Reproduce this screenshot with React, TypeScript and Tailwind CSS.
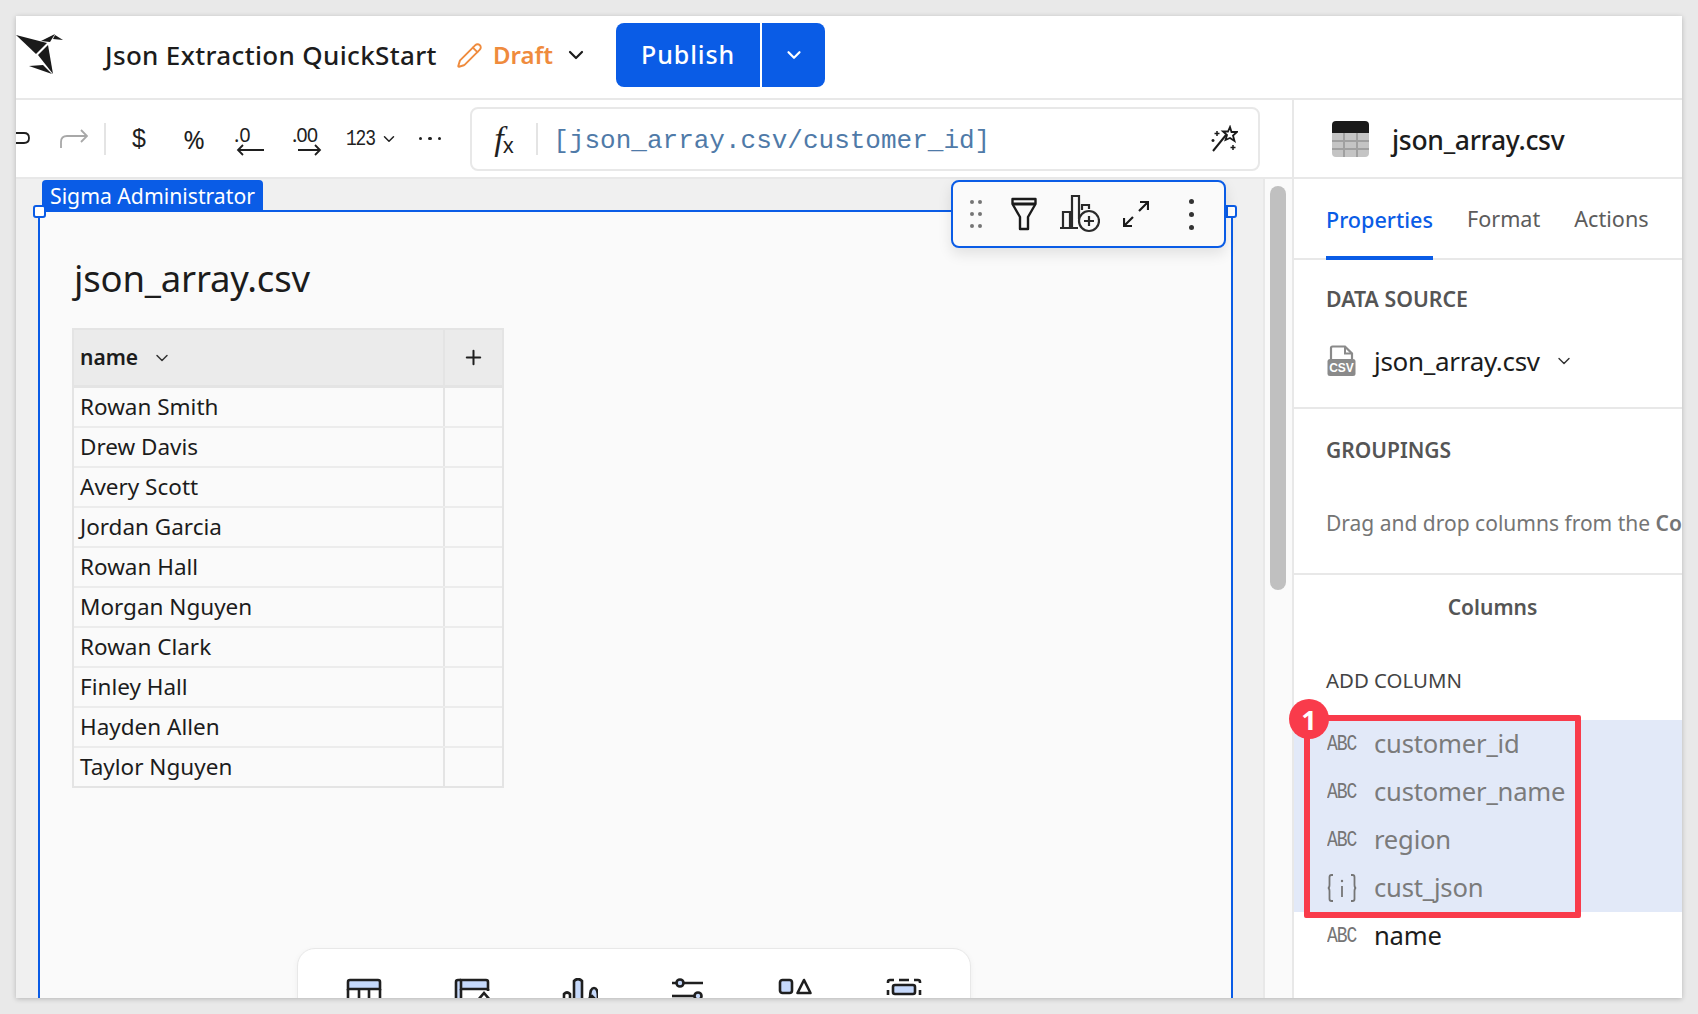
import { ChevronDown, Plus, Pencil } from "lucide-react";

const PEOPLE = [
  "Rowan Smith", "Drew Davis", "Avery Scott", "Jordan Garcia", "Rowan Hall",
  "Morgan Nguyen", "Rowan Clark", "Finley Hall", "Hayden Allen", "Taylor Nguyen",
];

function Logo() {
  return (
    <svg width="50" height="50" viewBox="16 32 50 50" className="shrink-0 mt-1" fill="#1a1a1a">
      <polygon points="16,35 47,43 36,54" />
      <polygon points="38,55 48,45 53,74" />
      <polygon points="29,66 43,65 52,74" />
      <polygon points="41,41 55,34 50,42" />
      <polygon points="55,35 63,40 53,39" />
    </svg>
  );
}

function Abc() {
  return <span className="w-[29px] shrink-0 font-['Liberation_Mono'] text-[18px] leading-none tracking-[-1px] text-[#757575] scale-y-[1.25]">ABC</span>;
}

function JsonIcon() {
  return (
    <svg width="30" height="30" viewBox="0 0 30 30" fill="none" stroke="#757575" strokeWidth="1.8" className="shrink-0">
      <path d="M6 2 H4.5 Q2.5 2 2.5 4 V12 Q2.5 15 0.8 15 Q2.5 15 2.5 18 V26 Q2.5 28 4.5 28 H6" />
      <path d="M24 2 H25.5 Q27.5 2 27.5 4 V12 Q27.5 15 29.2 15 Q27.5 15 27.5 18 V26 Q27.5 28 25.5 28 H24" />
      <path d="M15 13 V24" />
      <circle cx="15" cy="8" r="1.2" fill="#757575" stroke="none" />
    </svg>
  );
}

function BottomIcon({ kind }: { kind: number }) {
  const s = { stroke: "#1f1f1f", strokeWidth: 2.6, fill: "none" };
  return (
    <svg width="36" height="36" viewBox="0 0 36 36" className="shrink-0">
      {kind === 0 && (
        <g {...s}>
          <path d="M2 11 V4 Q2 2 4 2 H32 Q34 2 34 4 V11 Z" fill="#c6d9fb" />
          <path d="M2 11 V34 H34 V11 M13 11 V34 M23 11 V34" />
        </g>
      )}
      {kind === 1 && (
        <g {...s}>
          <rect x="2" y="2" width="5" height="32" fill="#c6d9fb" stroke="none" />
          <path d="M7 11 V2 H32 Q34 2 34 4 V11 Z" fill="#c6d9fb" />
          <path d="M2 34 V4 Q2 2 4 2 H7 M7 11 V34 M34 11 V13" />
          <path d="M24 22 L30 15 L36 22" />
        </g>
      )}
      {kind === 2 && (
        <g {...s}>
          <path d="M12 34 V3 Q16 -1 20 3 V34" fill="#c6d9fb" />
          <path d="M2 34 V16 Q5 13 8 16 V34" />
          <path d="M28 20 Q28 10 32 10 Q36 10 36 20" fill="#c6d9fb" />
          <path d="M22 26 L30 18 L36 24" />
        </g>
      )}
      {kind === 3 && (
        <g {...s}>
          <path d="M2 5 H6 M14 5 H33" />
          <circle cx="10" cy="5" r="3.5" fill="#c6d9fb" />
          <path d="M2 18 H24" />
          <circle cx="28" cy="18" r="3.5" fill="#c6d9fb" />
        </g>
      )}
      {kind === 4 && (
        <g {...s}>
          <rect x="2" y="2" width="12" height="13" rx="2.5" fill="#c6d9fb" />
          <path d="M26 2 L32.5 15 H19.5 Z" strokeLinejoin="round" />
        </g>
      )}
      {kind === 5 && (
        <g {...s}>
          <path d="M2 5 V4 Q2 2 4 2 H8 M13 2 H23 M28 2 H32 Q34 2 34 4 V5 M2 12 V17 M34 12 V17" />
          <rect x="7" y="7" width="22" height="9" rx="2" fill="#c6d9fb" />
        </g>
      )}
    </svg>
  );
}

export default function App() {
  return (
    <div className="h-screen bg-[#e9e9e9] p-4 font-['Noto_Sans',sans-serif] overflow-hidden">
      <div className="relative h-full flex flex-col bg-white overflow-hidden shadow-[0_1px_5px_rgba(0,0,0,0.22)]">
        {/* Top bar */}
        <header className="h-[84px] shrink-0 border-b-2 border-[#e8e8e8] flex items-center pb-1">
          <Logo />
          <div className="ml-[39px] text-[26px] font-medium tracking-[0.35px] text-[#1c1c1c] whitespace-nowrap">Json Extraction QuickStart</div>
          <Pencil size={27} strokeWidth={1.7} className="ml-[19px] text-[#ef8b3d]" />
          <div className="ml-[10px] text-[24px] font-semibold text-[#ef8b3d] leading-none">Draft</div>
          <ChevronDown size={24} strokeWidth={2.2} className="ml-[11px] text-[#1c1c1c]" />
          <div className="ml-[28px] h-[64px] w-[209px] rounded-lg bg-[#0a5ce6] flex text-white">
            <div className="w-[144px] flex items-center justify-center text-[25px] font-medium tracking-[0.9px]">Publish</div>
            <div className="flex-1 border-l-2 border-white flex items-center justify-center">
              <ChevronDown size={22} strokeWidth={2.4} />
            </div>
          </div>
        </header>

        <div className="flex-1 flex min-h-0">
          {/* Left column */}
          <div className="w-[1278px] shrink-0 flex flex-col border-r-2 border-[#e8e8e8] min-h-0">
            <div className="h-[79px] shrink-0 border-b-2 border-[#e8e8e8] flex items-center relative">
              <svg width="14" height="20" viewBox="0 0 14 20" fill="none" stroke="#1f1f1f" strokeWidth="1.8" className="shrink-0">
                <path d="M0 4 H8 Q13 4 13 9 Q13 14 8 14 H0" />
              </svg>
              <svg width="28" height="22" viewBox="0 0 28 22" fill="none" stroke="#a8a8a8" strokeWidth="1.8" className="ml-[30px] shrink-0">
                <path d="M27 8 H7 Q1 8 1 14 V20 M21 2 L27 8 L21 14" />
              </svg>
              <div className="ml-[16px] w-[2px] h-[32px] bg-[#e4e4e4]" />
              <span className="ml-[24px] w-[18px] text-[25px] leading-none font-['Liberation_Sans'] text-[#1f1f1f] text-center">$</span>
              <span className="ml-[33px] w-[26px] text-[26px] leading-none text-[#1f1f1f] text-center">%</span>
              <svg width="32" height="34" viewBox="0 0 32 34" className="ml-[26px] shrink-0" fill="#1f1f1f">
                <text x="1" y="20" fontSize="20" fontFamily="Noto Sans">.0</text>
                <path d="M31 28 H5 M10 23 L5 28 L10 33" fill="none" stroke="#1f1f1f" strokeWidth="1.8" />
              </svg>
              <svg width="32" height="34" viewBox="0 0 32 34" className="ml-[27px] shrink-0" fill="#1f1f1f">
                <text x="0" y="20" fontSize="20" fontFamily="Noto Sans" letterSpacing="-1">.00</text>
                <path d="M6 28 H28 M23 23 L28 28 L23 33" fill="none" stroke="#1f1f1f" strokeWidth="1.8" />
              </svg>
              <span className="ml-[22px] font-['Liberation_Mono'] text-[18px] tracking-[-1.2px] text-[#1f1f1f] leading-none scale-y-[1.2]">123</span>
              <ChevronDown size={18} strokeWidth={2} className="ml-[5px] text-[#1f1f1f]" />
              <div className="ml-[21px] flex gap-[6px]">
                <span className="w-[3.5px] h-[3.5px] rounded-full bg-[#1f1f1f]" />
                <span className="w-[3.5px] h-[3.5px] rounded-full bg-[#1f1f1f]" />
                <span className="w-[3.5px] h-[3.5px] rounded-full bg-[#1f1f1f]" />
              </div>
              {/* Formula bar */}
              <div className="ml-[29px] w-[790px] h-[64px] rounded-lg border-2 border-[#e8e8e8] flex items-center">
                <span className="ml-[22px] w-[26px] flex items-end text-[#1f1f1f] leading-none">
                  <span className="font-['Liberation_Serif'] italic text-[34px]">f</span>
                  <span className="text-[21px] -ml-[1px]">x</span>
                </span>
                <div className="ml-[16px] w-[2px] h-[32px] bg-[#e4e4e4]" />
                <span className="ml-[15px] pt-[5px] font-['Liberation_Mono'] text-[26px] text-[#4f7aa8] whitespace-nowrap">[json_array.csv/customer_id]</span>
                <svg width="28" height="28" viewBox="0 0 28 28" className="ml-auto mr-[20px]" fill="none" stroke="#1a1a1a" strokeWidth="2">
                  <path d="M3 26 L16 10" />
                  <path d="M20 2 L21.5 7 L27 7 L23 10.5 L24.5 16 L20 13 L15.5 15 L17 10 L13 6.5 L18 6.5 Z" strokeWidth="1.8" />
                  <path d="M7 6 V11 M4.5 8.5 H9.5 M23 20 V25 M20.5 22.5 H25.5 M3 14 V17 M1.5 15.5 H4.5" strokeWidth="1.5" />
                </svg>
              </div>
            </div>

            {/* Canvas */}
            <div className="flex-1 flex min-h-0 overflow-hidden">
              <div className="relative flex-1 bg-[#f0f0f0] pt-[31px] pl-[22px] flex min-h-0">
                <div className="w-[1195px] h-[900px] shrink-0 border-2 border-[#0a5ce6] bg-[#fafafa] pl-[32px] pt-[41px]">
                  <div className="pl-[2px] text-[36.5px] leading-[50px] text-[#1c1c1c] tracking-[-0.2px]">json_array.csv</div>
                  <div className="mt-[25px] w-[432px] border-2 border-[#e4e4e4]">
                    <div className="h-[58px] bg-[#ebebeb] border-b-[3px] border-[#e4e4e4] flex">
                      <div className="w-[371px] border-r-2 border-[#e4e4e4] flex items-center pl-[6px]">
                        <span className="text-[21px] font-semibold text-[#1c1c1c]">name</span>
                        <ChevronDown size={20} strokeWidth={1.8} className="ml-[14px] text-[#333]" />
                      </div>
                      <div className="flex-1 flex items-center justify-center">
                        <Plus size={23} strokeWidth={2.1} className="text-[#1f1f1f]" />
                      </div>
                    </div>
                    {PEOPLE.map((p, i) => (
                      <div key={p} className={`flex ${i < PEOPLE.length - 1 ? "h-[40px] border-b-2 border-[#ececec]" : "h-[38px]"}`}>
                        <div className="w-[371px] border-r-2 border-[#e4e4e4] pl-[6px] text-[22.5px] leading-[38px] text-[#1c1c1c] whitespace-nowrap">{p}</div>
                      </div>
                    ))}
                  </div>
                </div>

                {/* Selection decorations */}
                <div className="absolute left-[26px] top-[1px] h-[31px] w-[221px] rounded-t bg-[#0a5ce6] pl-[8px] text-[21.2px] leading-[32px] text-white whitespace-nowrap">Sigma Administrator</div>
                <div className="absolute left-[17px] top-[26px] w-[13px] h-[13px] rounded-[3px] border-2 border-[#0a5ce6] bg-white" />
                <div className="absolute left-[1210px] top-[26px] w-[11px] h-[13px] rounded-r-[3px] border-2 border-[#0a5ce6] bg-white" />

                {/* Floating element toolbar */}
                <div className="absolute left-[935px] top-[1px] w-[275px] h-[68px] rounded-lg border-2 border-[#0a5ce6] bg-[#fafafa] shadow-[0_6px_14px_rgba(0,0,0,0.1)] flex items-center">
                  <svg width="12" height="30" viewBox="0 0 12 30" fill="#757575" className="ml-[17px] shrink-0">
                    <circle cx="2" cy="3" r="2" /><circle cx="10" cy="3" r="2" />
                    <circle cx="2" cy="15" r="2" /><circle cx="10" cy="15" r="2" />
                    <circle cx="2" cy="27" r="2" /><circle cx="10" cy="27" r="2" />
                  </svg>
                  <svg width="26" height="34" viewBox="0 0 26 34" fill="none" stroke="#1a1a1a" strokeWidth="2.4" className="ml-[29px] shrink-0">
                    <path d="M1.5 2 H24.5 V7 L17 20 V32 H9 V20 L1.5 7 Z" strokeLinejoin="round" />
                    <path d="M2 7 H24" strokeWidth="3" />
                  </svg>
                  <svg width="40" height="38" viewBox="0 0 40 38" fill="none" stroke="#2a2a2a" strokeWidth="2.2" className="ml-[23px] shrink-0">
                    <path d="M0 33 H18 M3 33 V17 H10 V33 M12 33 V1 H19 V24 M22 15 V10 H29 V14" />
                    <circle cx="29" cy="26" r="10" />
                    <path d="M29 21 V31 M24 26 H34" />
                  </svg>
                  <svg width="26" height="26" viewBox="0 0 26 26" fill="none" stroke="#1a1a1a" strokeWidth="2.2" className="ml-[23px] shrink-0">
                    <path d="M16 10 L25 1 M17 1 H25 V9 M10 16 L1 25 M1 17 V25 H9" />
                  </svg>
                  <div className="ml-[40px] flex flex-col gap-[8px]">
                    <span className="w-[5px] h-[5px] rounded-full bg-[#333]" />
                    <span className="w-[5px] h-[5px] rounded-full bg-[#333]" />
                    <span className="w-[5px] h-[5px] rounded-full bg-[#333]" />
                  </div>
                </div>

                {/* Add-element bar */}
                <div className="absolute left-[281px] top-[769px] w-[674px] h-[120px] rounded-[18px] border border-[#e8e8e8] bg-white shadow-[0_2px_6px_rgba(0,0,0,0.05)] flex pl-[48px] pt-[29px] gap-[72px]">
                  {[0, 1, 2, 3, 4, 5].map((k) => <BottomIcon key={k} kind={k} />)}
                </div>
              </div>
              <div className="w-[29px] shrink-0 bg-[#fafafa] border-l-2 border-[#e8e8e8] pl-[5px] pt-[7px]">
                <div className="w-[16px] h-[404px] rounded-full bg-[#c0c0c0]" />
              </div>
            </div>
          </div>

          {/* Right panel */}
          <aside className="flex-1 min-w-0 flex flex-col overflow-hidden">
            <div className="h-[79px] shrink-0 border-b-2 border-[#e8e8e8] flex items-center pl-[38px]">
              <svg width="37" height="36" viewBox="0 0 37 36" className="shrink-0">
                <path d="M0 12 V4 Q0 0 4 0 H33 Q37 0 37 4 V12 Z" fill="#1a1a1a" />
                <path d="M0 12 H37 V32 Q37 36 33 36 H4 Q0 36 0 32 Z" fill="#c4c4c4" />
                <path d="M0 20 H37 M0 28 H37 M12 12 V36 M25 12 V36" stroke="#a0a0a0" strokeWidth="2" />
              </svg>
              <span className="ml-[23px] pt-[4px] text-[26.5px] font-medium tracking-[-0.3px] text-[#1c1c1c]">json_array.csv</span>
            </div>
            <div className="h-[81px] shrink-0 border-b-2 border-[#e8e8e8] flex items-stretch pl-[32px] gap-[34px] text-[21.6px] text-[#5c5c5c]">
              <div className="relative -mb-[2px] flex items-center border-b-4 border-[#0a5ce6] pt-[6px] font-medium text-[#0a5ce6]">Properties</div>
              <div className="flex items-center pt-[2px]">Format</div>
              <div className="flex items-center pt-[2px]">Actions</div>
            </div>
            <div className="h-[149px] shrink-0 border-b-2 border-[#e8e8e8] pl-[32px] pt-[23px]">
              <div className="text-[21.3px] leading-[32px] font-semibold text-[#555]">DATA SOURCE</div>
              <div className="mt-[27px] flex items-center h-[38px]">
                <svg width="29" height="32" viewBox="0 0 29 32" className="shrink-0 ml-[1px]">
                  <path d="M4 14 V3 Q4 1.5 5.5 1.5 H18 L25 8.5 V14" fill="none" stroke="#8a8a8a" strokeWidth="2.2" />
                  <path d="M18 1.5 V8.5 H25" fill="none" stroke="#8a8a8a" strokeWidth="2" />
                  <rect x="0.5" y="14" width="28" height="17" rx="2.5" fill="#8a8a8a" />
                  <text x="14.5" y="27" textAnchor="middle" fontSize="12" fontWeight="700" fontFamily="Liberation Sans" fill="#fff">CSV</text>
                </svg>
                <span className="ml-[18px] text-[26px] tracking-[-0.3px] text-[#1c1c1c]">json_array.csv</span>
                <ChevronDown size={20} strokeWidth={1.7} className="ml-[14px] text-[#333]" />
              </div>
            </div>
            <div className="h-[166px] shrink-0 border-b-2 border-[#e8e8e8] pl-[32px] pt-[25px]">
              <div className="text-[21px] leading-[32px] font-semibold text-[#555]">GROUPINGS</div>
              <div className="mt-[41px] text-[21px] leading-[32px] text-[#757575] whitespace-nowrap">Drag and drop columns from the <b className="font-semibold">Columns</b></div>
            </div>
            <div className="pl-[9px] text-center text-[21px] font-semibold text-[#555] leading-[32px] mt-[16px]">Columns</div>
            <div className="pl-[32px] mt-[41px] text-[20.4px] leading-[32px] text-[#444]">ADD COLUMN</div>
            <div className="mt-[24px] bg-[#e2e9f8] text-[#7b7b7b]">
              {["customer_id", "customer_name", "region"].map((c) => (
                <div key={c} className="h-[48px] flex items-center pl-[33px] text-[25.6px] tracking-[-0.2px]">
                  <Abc /><span className="ml-[18px]">{c}</span>
                </div>
              ))}
              <div className="h-[48px] flex items-center pl-[33px] text-[25.6px] tracking-[-0.2px]">
                <JsonIcon /><span className="ml-[17px]">cust_json</span>
              </div>
            </div>
            <div className="h-[48px] flex items-center pl-[33px] text-[25.6px] tracking-[-0.2px] text-[#1c1c1c]">
              <Abc /><span className="ml-[18px]">name</span>
            </div>
          </aside>
        </div>

        {/* Annotation */}
        <div className="absolute left-[1288px] top-[699px] w-[277px] h-[203px] rounded-[2px] border-[6px] border-[#f93b4b]" />
        <div className="absolute left-[1273px] top-[683px] w-[40px] h-[40px] rounded-full bg-[#f93b4b] flex items-center justify-center text-[27px] font-bold leading-none text-white">1</div>
      </div>
    </div>
  );
}
